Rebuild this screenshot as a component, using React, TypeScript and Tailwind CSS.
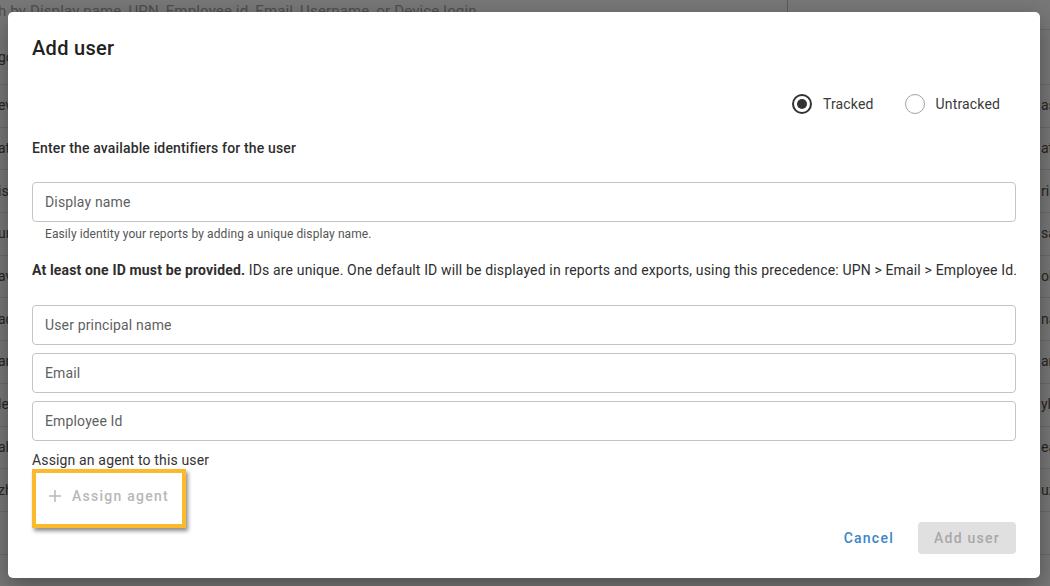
import React from "react";

const leftTexts = ["gonzalez", "evans", "atkins", "isaacs", "urban", "avery", "adams", "anders", "lee", "allen", "zhang", "", ""];
const rightTexts = ["", "as", "at", "ris", "sa", "ob", "na", "an", "yle", "ea", "uz", "", ""];

function Field({ label }: { label: string }) {
  return (
    <div className="h-10 w-full rounded-[4px] border border-[#c4c4c4] pl-3 flex items-center text-[14px] tracking-[0.15px] text-[#5f5f5f]">
      {label}
    </div>
  );
}

function Radio({ label, checked }: { label: string; checked?: boolean }) {
  return (
    <div className="flex items-center">
      {checked ? (
        <span className="w-5 h-5 rounded-full border-2 border-[#333333] flex items-center justify-center">
          <span className="w-2.5 h-2.5 rounded-full bg-[#333333]" />
        </span>
      ) : (
        <span className="w-5 h-5 rounded-full border-[1.5px] border-[#a3a3a3]" />
      )}
      <span className="ml-[11px] text-[14px] tracking-[0.15px] text-[#3a3a3a]">{label}</span>
    </div>
  );
}

export default function App() {
  return (
    <div
      className="relative w-[1050px] h-[586px] overflow-hidden bg-[#787878]"
      style={{ fontFamily: "Roboto, 'Liberation Sans', sans-serif" }}
    >
      {/* background page (dimmed) */}
      <div className="flex flex-col">
        <div className="flex h-[30px]">
          <div className="w-[788px] border-r border-[#5c5c5c] overflow-hidden">
            <div className="pt-[1px] -ml-[2px] text-[15px] leading-[20px] tracking-[0.15px] text-[#4e4e4e] whitespace-nowrap">
              h by Display name, UPN, Employee id, Email, Username, or Device login
            </div>
          </div>
          <div className="flex-1 border-b border-[#6a6a6a]" />
        </div>
        {leftTexts.map((t, i) => (
          <div
            key={i}
            className={`flex items-center border-b border-[#6a6a6a] text-[14px] text-[#262626] ${i === 0 ? "h-[55px]" : "h-[42.7px]"}`}
          >
            <span className="flex-1 -ml-[2px] whitespace-nowrap overflow-hidden">{t}</span>
            <span className="w-[9px] whitespace-nowrap overflow-hidden">{rightTexts[i]}</span>
          </div>
        ))}
      </div>

      {/* modal */}
      <div className="absolute inset-0 pt-[12px] pl-[8px] pr-[10px] pb-[8px] flex">
        <div className="w-[1032px] min-w-0 bg-white rounded-[5px] shadow-[0_8px_24px_rgba(0,0,0,0.35)] px-6 pt-5 pb-6 flex flex-col overflow-hidden">
          <h2 className="text-[20px] leading-[32px] font-medium tracking-[0.3px] text-[#212121]">Add user</h2>

          <div className="mt-5 h-10 flex items-center justify-end pr-[16px] gap-[31px]">
            <Radio label="Tracked" checked />
            <Radio label="Untracked" />
          </div>

          <p className="mt-[14px] text-[14px] leading-5 font-medium tracking-[0.15px] text-[#2e2e2e]">
            Enter the available identifiers for the user
          </p>

          <div className="mt-6">
            <Field label="Display name" />
          </div>
          <p className="mt-1 pl-[13px] text-[12px] leading-4 tracking-[0.1px] text-[#555555]">
            Easily identity your reports by adding a unique display name.
          </p>

          <p className="mt-[18px] text-[14px] leading-5 tracking-[0.15px] text-[#2e2e2e] whitespace-nowrap">
            <span className="font-bold">At least one ID must be provided.</span> IDs are unique. One default ID will be
            displayed in reports and exports, using this precedence: UPN &gt; Email &gt; Employee Id.
          </p>

          <div className="mt-[25px] flex flex-col gap-2">
            <Field label="User principal name" />
            <Field label="Email" />
            <Field label="Employee Id" />
          </div>

          <p className="mt-[9px] text-[14px] leading-5 tracking-[0.15px] text-[#333333]">Assign an agent to this user</p>

          <div className="mt-2 ml-1 relative self-start">
            <div className="h-9 pl-3 pr-3 flex items-center text-[14px] font-medium tracking-[1.25px] text-[#b8b8b8]">
              <svg width="14" height="14" viewBox="0 0 14 14" className="mr-[10px]">
                <path d="M7 1v12M1 7h12" stroke="#b8b8b8" strokeWidth="1.5" />
              </svg>
              Assign agent
            </div>
            <div className="absolute left-[-4px] top-[-9px] w-[154px] h-[59px] border-4 border-[#fbb92c] shadow-[2px_3px_4px_rgba(0,0,0,0.45)]" />
          </div>

          <div className="mt-2 flex justify-end items-center gap-[24px]">
            <span className="text-[14px] font-medium tracking-[1.25px] text-[#3a86c8]">Cancel</span>
            <div className="h-8 w-[98px] rounded-[4px] bg-[#e0e0e0] flex items-center justify-center text-[14px] font-medium tracking-[1.25px] text-[#a8a8a8]">
              Add user
            </div>
          </div>
        </div>
      </div>
    </div>
  );
}
